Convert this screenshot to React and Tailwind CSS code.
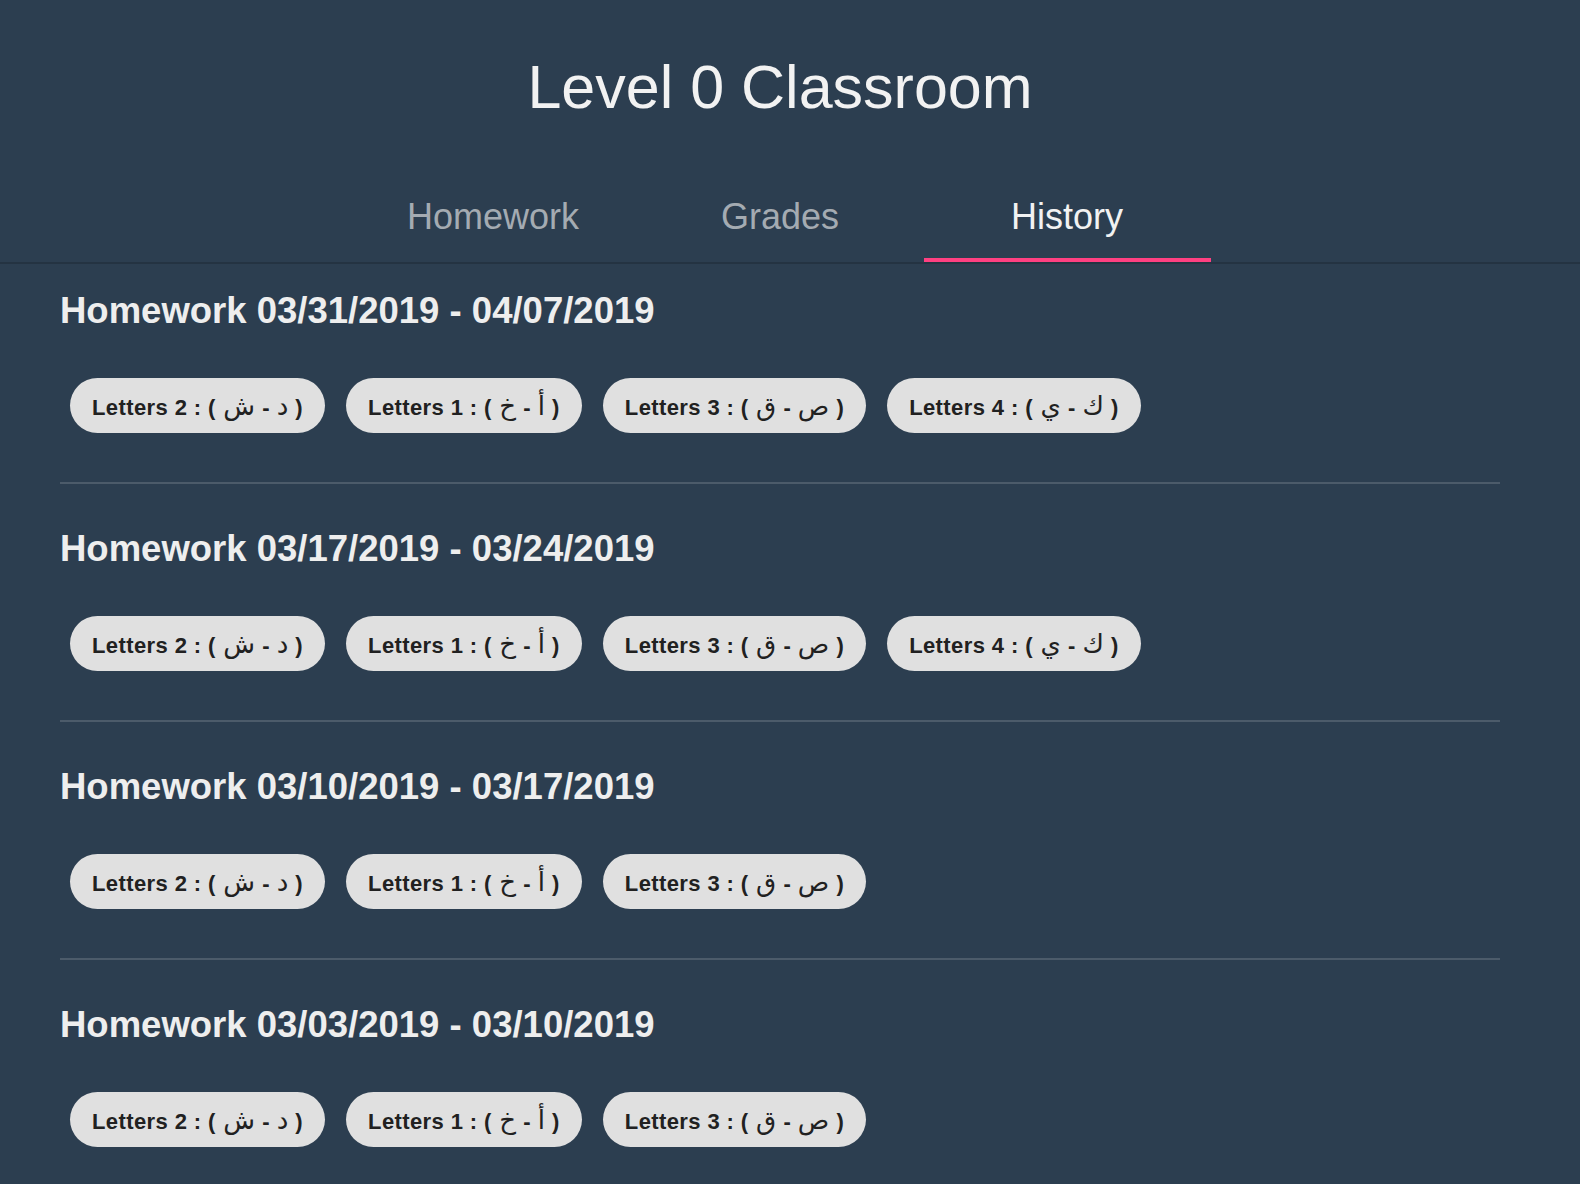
import React from "react";

const all = [
  ["Letters 2", "د", "ش"],
  ["Letters 1", "أ", "خ"],
  ["Letters 3", "ص", "ق"],
  ["Letters 4", "ك", "ي"],
];

const weeks = [
  { title: "Homework 03/31/2019 - 04/07/2019", items: all },
  { title: "Homework 03/17/2019 - 03/24/2019", items: all },
  { title: "Homework 03/10/2019 - 03/17/2019", items: all.slice(0, 3) },
  { title: "Homework 03/03/2019 - 03/10/2019", items: all.slice(0, 3) },
];

const tabs = ["Homework", "Grades", "History"];

const Chip = ({ name, from, to }) => (
  <div className="h-[55px] px-[22px] rounded-full bg-[#e0e0e0] flex items-center text-[22px] leading-none font-bold tracking-[0.4px] text-[#212121] whitespace-nowrap">
    <span>
      {name} : ({" "}
      <span className="mx-[1px] font-normal text-[26px] font-['DejaVu_Sans',sans-serif] tracking-normal">{from}</span>
      {" - "}
      <span className="mx-[1px] font-normal text-[26px] font-['DejaVu_Sans',sans-serif] tracking-normal">{to}</span>
      {" )"}
    </span>
  </div>
);

const App = () => {
  return (
    <div className="min-h-screen bg-[#2c3e50] font-['Liberation_Sans','DejaVu_Sans',Arial,sans-serif]">
      {/* Header */}
      <header className="border-b-2 border-[#243342]">
        <div className="w-[1560px]">
          <h1 className="h-[174px] flex items-center justify-center text-[61px] leading-none text-[#f2f2f2]">
            Level 0 Classroom
          </h1>
          <nav className="flex justify-center">
            {tabs.map((tab) => (
              <div
                key={tab}
                className={
                  tab === "History"
                    ? "relative w-[287px] h-[88px] pb-[3px] flex items-center justify-center text-[36px] text-[#f2f2f2]"
                    : "relative w-[287px] h-[88px] pb-[3px] flex items-center justify-center text-[36px] text-[#a4abb2]"
                }
              >
                {tab}
                {tab === "History" && (
                  <span className="absolute left-0 right-0 bottom-0 h-[4px] bg-[#ff4081]" />
                )}
              </div>
            ))}
          </nav>
        </div>
      </header>

      {/* History list */}
      <main className="w-[1560px] px-[60px] pt-[27px]">
        {weeks.map((week, i) => (
          <section key={week.title} className={i === 0 ? "" : "mt-[45px]"}>
            <h2 className="h-[40px] leading-[40px] text-[36.5px] font-bold text-[#eeeeee]">
              {week.title}
            </h2>
            <div className="mt-[47px] pl-[10px] flex gap-[21px]">
              {week.items.map(([name, from, to]) => (
                <Chip key={name} name={name} from={from} to={to} />
              ))}
            </div>
            {i < weeks.length - 1 && <div className="mt-[49px] h-[2px] bg-[#4c5b6a]" />}
          </section>
        ))}
      </main>
    </div>
  );
};

export default App;
